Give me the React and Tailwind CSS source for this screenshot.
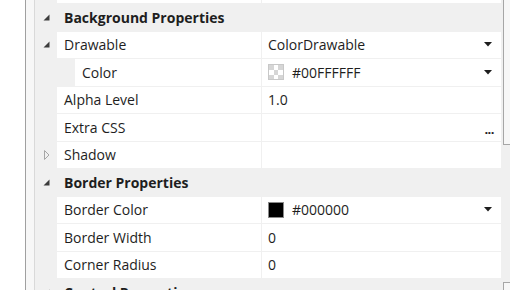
function Expanded() {
  return (
    <svg width="7" height="7" viewBox="0 0 7 7">
      <polygon points="6.5,0.5 6.5,6.5 0.5,6.5" fill="#3c3c3c" />
    </svg>
  )
}

function Collapsed() {
  return (
    <svg width="6" height="10" viewBox="0 0 6 10">
      <polygon points="0.5,0.5 5,5 0.5,9.5" fill="none" stroke="#a6a6a6" strokeWidth="1" />
    </svg>
  )
}

function DropArrow() {
  return (
    <svg width="8" height="5" viewBox="0 0 8 5" className="ml-auto mr-[3px]">
      <polygon points="0,0 8,0 4,4.5" fill="#1e1e1e" />
    </svg>
  )
}

function Header({ label }) {
  return (
    <div className="flex h-[26.5px] shrink-0 items-center bg-[#f0f0f0]">
      <div className="flex w-[22px] items-center justify-center pl-px">
        <Expanded />
      </div>
      <span className="pl-[7px] font-bold">{label}</span>
    </div>
  )
}

function Row({ name, indent, toggle, children }) {
  return (
    <div className="flex h-[26.5px] shrink-0 items-stretch">
      <div className="flex w-[22px] items-center justify-center pl-px">
        {toggle === "open" && <Expanded />}
        {toggle === "closed" && <Collapsed />}
      </div>
      {indent && <div className="w-[18px]" />}
      <div className={`mr-px flex items-center bg-white pl-[7px] ${indent ? "w-[186px]" : "w-[204px]"}`}>
        {name}
      </div>
      <div className="flex flex-1 items-center bg-white pl-[6px] pr-[6px]">{children}</div>
    </div>
  )
}

function Checker() {
  return (
    <div className="mr-[8px] grid h-[16px] w-[16px] grid-cols-3 grid-rows-3 border border-[#c8c8c8]">
      {[0, 1, 2, 3, 4, 5, 6, 7, 8].map((i) => (
        <div key={i} className={i % 2 === 0 ? "bg-[#d6d6d6]" : "bg-white"} />
      ))}
    </div>
  )
}

export default function App() {
  return (
    <div className="flex h-[290px] w-[510px] overflow-hidden bg-white font-['Open_Sans',sans-serif] text-[14px] text-[#1e1e1e]">
      <div className="w-[25px] bg-white" />
      <div className="w-[10px] border-l border-r border-l-[#a0a0a0] border-r-[#d9d9d9] bg-[#f7f7f7]" />
      <div className="flex w-[466px] flex-col gap-px bg-[#f0f0f0]">
        <div className="flex h-[3px] shrink-0">
          <div className="ml-[22px] mr-px w-[204px] bg-white" />
          <div className="flex-1 bg-white" />
        </div>
        <Header label="Background Properties" />
        <Row name="Drawable" toggle="open">
          <span>ColorDrawable</span>
          <DropArrow />
        </Row>
        <Row name="Color" indent>
          <Checker />
          <span>#00FFFFFF</span>
          <DropArrow />
        </Row>
        <Row name="Alpha Level">
          <span>1.0</span>
        </Row>
        <Row name="Extra CSS">
          <span className="ml-auto mt-[5px] mr-[1px] text-[13px] font-bold tracking-[-0.5px]">...</span>
        </Row>
        <Row name="Shadow" toggle="closed" />
        <Header label="Border Properties" />
        <Row name="Border Color">
          <div className="mr-[8px] h-[16px] w-[16px] border border-[#8a8a8a] bg-black" />
          <span>#000000</span>
          <DropArrow />
        </Row>
        <Row name="Border Width">
          <span>0</span>
        </Row>
        <Row name="Corner Radius">
          <span>0</span>
        </Row>
        <Header label="Control Properties" />
      </div>
      <div className="flex flex-1 flex-col bg-[#f0f0f0]">
        <div className="ml-[2px] h-[145px] border-b border-l border-[#a6a6a6] bg-[#f7f7f7]" />
        <div className="flex-1" />
        <div className="ml-[2px] h-[8px] border-l border-t border-[#a6a6a6] bg-[#f7f7f7]" />
      </div>
    </div>
  )
}
